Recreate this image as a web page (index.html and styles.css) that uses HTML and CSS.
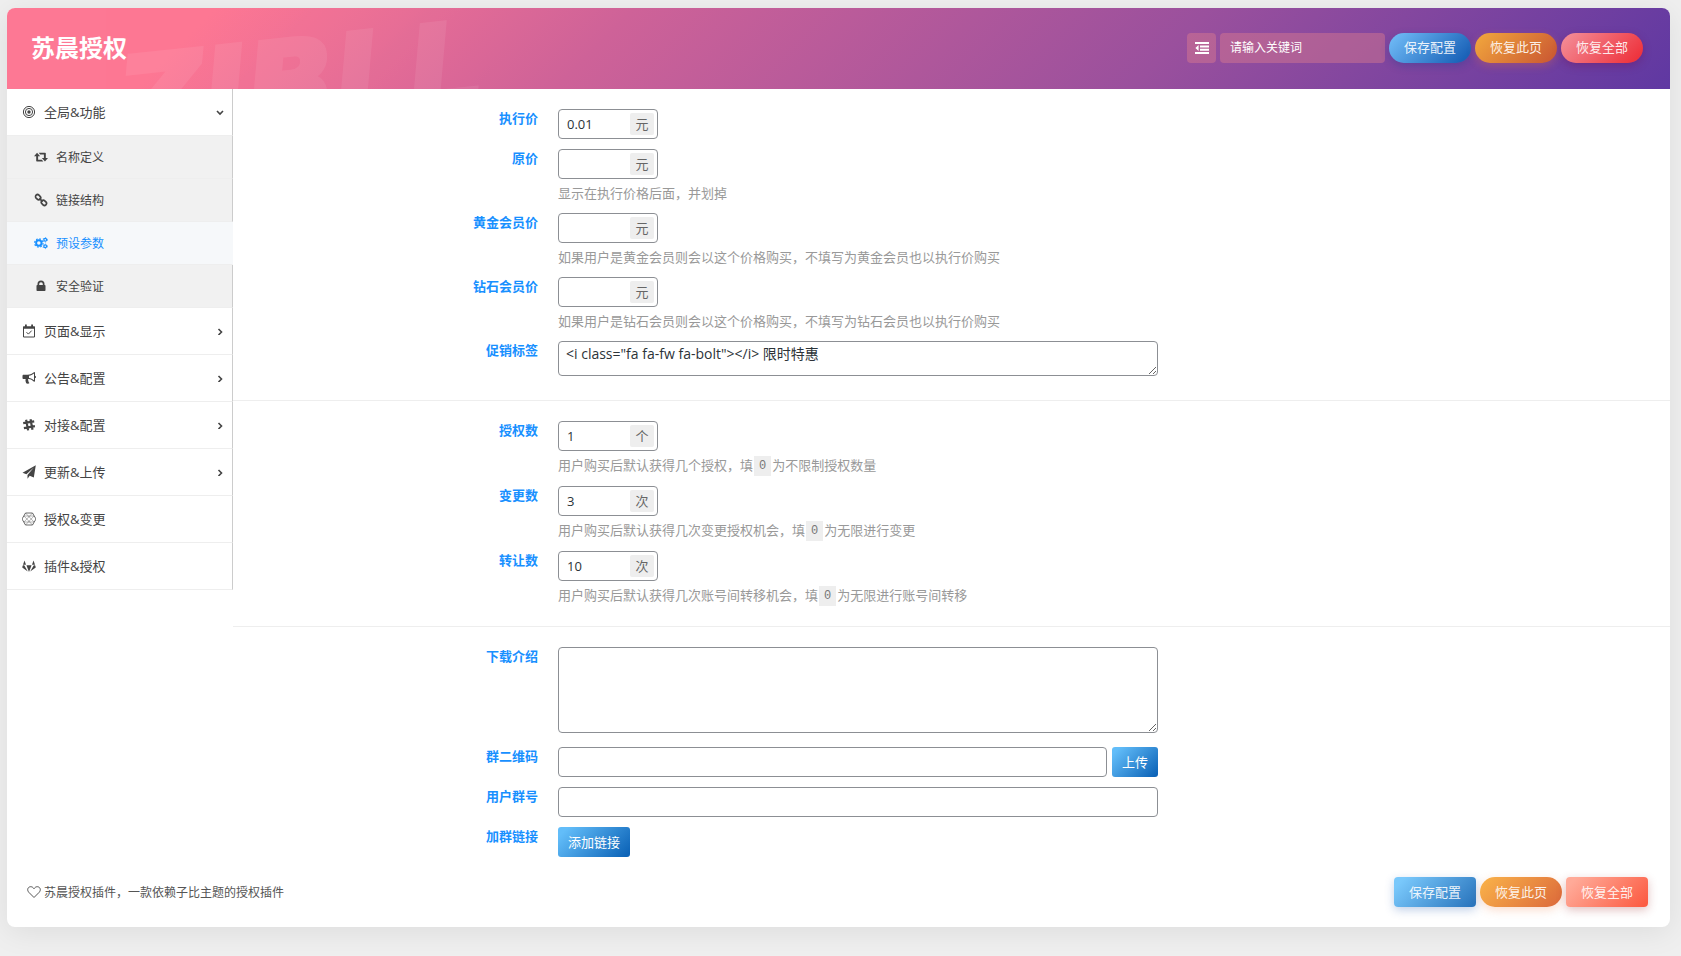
FILE: index.html
```
<!DOCTYPE html>
<html lang="zh-CN">
<head>
<meta charset="utf-8">
<title>苏晨授权</title>
<link rel="stylesheet" href="styles.css">
</head>
<body>
<form class="panel">
  <header class="header">
    <div class="watermark" aria-hidden="true">ZIBLL</div>
    <h1 class="header-title">苏晨授权</h1>
    <div class="header-tools">
      <button type="button" class="expand" aria-label="展开全部">
        <svg class="icon" viewBox="0 0 14 14"><path d="M0 1h14v2H0zM5 4.400h9v2H5zM5 7.700h9v2H5zM0 11h14v2H0zM3.600 4v6L.4 7z"/></svg>
      </button>
      <input class="search" type="text" placeholder="请输入关键词" aria-label="请输入关键词">
      <button type="button" class="btn round blue">保存配置</button>
      <button type="button" class="btn round orange">恢复此页</button>
      <button type="button" class="btn round red">恢复全部</button>
    </div>
  </header>

  <div class="main">
    <nav class="nav">
      <a class="item" href="#global">
        <svg class="icon line" viewBox="0 0 14 14"><circle cx="7" cy="7" r="5.600"/><circle cx="7" cy="7" r="3.600"/><circle class="solid" cx="7" cy="7" r="1.700"/></svg>
        <span class="name">全局&amp;功能</span>
        <svg class="arrow" viewBox="0 0 8 8"><path d="M1 3l3 3 3-3"/></svg>
      </a>
      <div class="sub">
        <a class="item" href="#names">
          <svg class="icon" viewBox="0 0 16 14"><path d="M3.500 2L7 6H4.700v4H9l1.600 2H3.300a.8.8 0 0 1-.8-.8V6H0zM5.400 2h7.300c.5 0 .8.300.8.800V8H16l-3.500 4L9 8h2.300V4H7z"/></svg>
          <span class="name">名称定义</span>
        </a>
        <a class="item" href="#links">
          <svg class="icon line thick" viewBox="0 0 14 14"><rect x="1.300" y="2.200" width="5.600" height="4" rx="2" transform="rotate(45 4.100 4.200)"/><rect x="7.100" y="7.800" width="5.600" height="4" rx="2" transform="rotate(45 9.900 9.800)"/><path d="M5.400 5.400l3.200 3.200"/></svg>
          <span class="name">链接结构</span>
        </a>
        <a class="item active" href="#presets">
          <svg class="icon line" viewBox="0 0 16 14"><circle cx="5.500" cy="7" r="3.100" stroke-width="2.200"/><circle cx="5.500" cy="7" r="4.800" stroke-width="1.300" stroke-dasharray="1.900 1.870"/><circle cx="12.800" cy="3.400" r="1.600" stroke-width="1.400"/><circle cx="12.800" cy="3.400" r="2.600" stroke-width=".8" stroke-dasharray="1.300 1.400"/><circle cx="12.800" cy="10.800" r="1.600" stroke-width="1.400"/><circle cx="12.800" cy="10.800" r="2.600" stroke-width=".8" stroke-dasharray="1.300 1.400"/></svg>
          <span class="name">预设参数</span>
        </a>
        <a class="item" href="#security">
          <svg class="icon" viewBox="0 0 14 14"><path fill-rule="evenodd" d="M3.500 6V5a3.500 3.500 0 0 1 7 0v1h.2c.5 0 .8.300.8.800v4.400c0 .5-.3.800-.8.800H3.300a.8.8 0 0 1-.8-.8V6.800c0-.5.3-.8.8-.8zM5.200 6h3.600V5a1.800 1.800 0 0 0-3.600 0z"/></svg>
          <span class="name">安全验证</span>
        </a>
      </div>
      <a class="item" href="#pages">
        <svg class="icon line" viewBox="0 0 14 14"><path d="M1.500 3h11v10h-11zM4.500 8.200l1.900 1.900 3.300-3.500"/><path class="solid" d="M1 2.500h12v2.200H1zM3 .5h1.800v3H3zM9.200.5H11v3H9.200z"/></svg>
        <span class="name">页面&amp;显示</span>
        <svg class="arrow" viewBox="0 0 8 8"><path d="M2.500 2l3 3-3 3"/></svg>
      </a>
      <a class="item" href="#notice">
        <svg class="icon" viewBox="0 0 14 14"><path fill-rule="evenodd" d="M12.300 1c.4 0 .7.300.7.700v3c1.300.2 1.300 2.200 0 2.400v3c0 .6-.6.900-1 .6C10.400 9.300 8.700 8.300 6.500 8.100c-.9.500-.4 1.500.1 1.900-.5.700.4 1.500.9 2-.5 1-2.500 1-3.300.3-.5-1.500-1.100-2.700-.5-4.300H1.600C1 8 .5 7.500.5 6.900V5c0-.7.500-1.200 1.100-1.200H5.500C8.300 3.800 10.400 2.300 12.300 1zM12 2.400C10.500 3.600 8.900 4.500 7 4.700v2.400c1.900.2 3.500 1 5 2.200z"/></svg>
        <span class="name">公告&amp;配置</span>
        <svg class="arrow" viewBox="0 0 8 8"><path d="M2.500 2l3 3-3 3"/></svg>
      </a>
      <a class="item" href="#connect">
        <svg class="icon line" viewBox="0 0 14 14"><path stroke-width="2.200" d="M4.100 1.800l2 10.600M8.500 1.200l2 10.600M1.200 5.200l11-1.900M1.900 10.100l11-1.900"/></svg>
        <span class="name">对接&amp;配置</span>
        <svg class="arrow" viewBox="0 0 8 8"><path d="M2.500 2l3 3-3 3"/></svg>
      </a>
      <a class="item" href="#update">
        <svg class="icon" viewBox="0 0 14 14"><path d="M13.800.3l-2 12.200-4.100-1.700-2.200 2.900V9.900l6.300-7.400-7.400 6.700L.5 7.800z"/></svg>
        <span class="name">更新&amp;上传</span>
        <svg class="arrow" viewBox="0 0 8 8"><path d="M2.500 2l3 3-3 3"/></svg>
      </a>
      <a class="item" href="#license">
        <svg class="icon line thin" viewBox="1 0 14 14"><path stroke-width=".8" d="M4.500 1h7L15 7l-3.500 6h-7L1 7z"/><path d="M4.500 1L13 10M11.500 1L3 10M4.500 13L13 4M11.500 13L3 4M3 4h10M3 10h10"/></svg>
        <span class="name">授权&amp;变更</span>
      </a>
      <a class="item" href="#plugins">
        <svg class="icon" viewBox="0 0 14 14"><path d="M2.500 1.500L4 5.700H1zM11.500 1.500L13 5.700h-3zM.9 6.200h1.300L5.800 12.500.6 8.700a.7.7 0 0 1-.3-.8zM13.100 6.200h-1.300L8.200 12.500l5.200-3.800c.3-.2.4-.5.300-.8zM4.400 6.200h5.200L7 13z"/></svg>
        <span class="name">插件&amp;授权</span>
      </a>
    </nav>

    <div class="content">
      <section class="group">
        <div class="field">
          <label class="label" for="price">执行价</label>
          <div class="control"><div class="number"><input id="price" type="text" value="0.01"><span class="unit">元</span></div></div>
        </div>
        <div class="field">
          <label class="label" for="original">原价</label>
          <div class="control">
            <div class="number"><input id="original" type="text"><span class="unit">元</span></div>
            <p class="desc">显示在执行价格后面，并划掉</p>
          </div>
        </div>
        <div class="field">
          <label class="label" for="gold">黄金会员价</label>
          <div class="control">
            <div class="number"><input id="gold" type="text"><span class="unit">元</span></div>
            <p class="desc">如果用户是黄金会员则会以这个价格购买，不填写为黄金会员也以执行价购买</p>
          </div>
        </div>
        <div class="field">
          <label class="label" for="diamond">钻石会员价</label>
          <div class="control">
            <div class="number"><input id="diamond" type="text"><span class="unit">元</span></div>
            <p class="desc">如果用户是钻石会员则会以这个价格购买，不填写为钻石会员也以执行价购买</p>
          </div>
        </div>
        <div class="field">
          <label class="label" for="tag">促销标签</label>
          <div class="control"><textarea id="tag" class="area short">&lt;i class="fa fa-fw fa-bolt"&gt;&lt;/i&gt; 限时特惠</textarea></div>
        </div>
      </section>

      <section class="group">
        <div class="field">
          <label class="label" for="auth">授权数</label>
          <div class="control">
            <div class="number"><input id="auth" type="text" value="1"><span class="unit">个</span></div>
            <p class="desc">用户购买后默认获得几个授权，填<code>0</code>为不限制授权数量</p>
          </div>
        </div>
        <div class="field">
          <label class="label" for="change">变更数</label>
          <div class="control">
            <div class="number"><input id="change" type="text" value="3"><span class="unit">次</span></div>
            <p class="desc">用户购买后默认获得几次变更授权机会，填<code>0</code>为无限进行变更</p>
          </div>
        </div>
        <div class="field">
          <label class="label" for="transfer">转让数</label>
          <div class="control">
            <div class="number"><input id="transfer" type="text" value="10"><span class="unit">次</span></div>
            <p class="desc">用户购买后默认获得几次账号间转移机会，填<code>0</code>为无限进行账号间转移</p>
          </div>
        </div>
      </section>

      <section class="group">
        <div class="field">
          <label class="label" for="intro">下载介绍</label>
          <div class="control"><textarea id="intro" class="area tall"></textarea></div>
        </div>
        <div class="field">
          <label class="label" for="qrcode">群二维码</label>
          <div class="control upload"><input id="qrcode" class="text" type="text"><button type="button" class="small-btn">上传</button></div>
        </div>
        <div class="field">
          <label class="label" for="group">用户群号</label>
          <div class="control upload"><input id="group" class="text" type="text"></div>
        </div>
        <div class="field">
          <label class="label" for="add-link">加群链接</label>
          <div class="control upload"><button id="add-link" type="button" class="small-btn">添加链接</button></div>
        </div>
      </section>
    </div>
  </div>

  <footer class="footer">
    <p class="credit">
      <svg class="heart" viewBox="0 0 14 14"><path d="M7 12.500L1.800 7.300C-.6 4.500 1.300 1.700 3.700 1.700 5.300 1.700 6.300 2.700 7 3.700c.7-1 1.700-2 3.300-2 2.400 0 4.300 2.800 1.900 5.600z"/></svg>
      <span>苏晨授权插件，一款依赖子比主题的授权插件</span>
    </p>
    <div class="footer-tools">
      <button type="button" class="btn light-blue">保存配置</button>
      <button type="button" class="btn round light-orange">恢复此页</button>
      <button type="button" class="btn light-red">恢复全部</button>
    </div>
  </footer>
</form>
</body>
</html>
```
FILE: styles.css
```
* { box-sizing: border-box; }

body {
  margin: 0;
  padding: 8px 11px 28px 7px;
  background: #efefef;
  color: #444;
  font-family: "Open Sans", "Noto Sans CJK SC", sans-serif;
  font-size: 13px;
  line-height: 19px;
}

button, input, textarea { margin: 0; font: inherit; }
button { border: 0; cursor: pointer; }

.panel {
  background: #fff;
  border-radius: 8px;
  box-shadow: 0 5px 30px rgba(0, 0, 0, .08);
}

/* Header */
.header {
  position: relative;
  display: flex;
  align-items: center;
  justify-content: space-between;
  overflow: hidden;
  height: 81px;
  padding: 0 27px 2px 24px;
  border-radius: 8px 8px 0 0;
  background: linear-gradient(135deg, #fd7894 12%, #ce6298 36%, #9a509d 69%, #5f38a2 100%);
}
.watermark {
  position: absolute;
  left: 112px;
  top: 25px;
  color: #fff;
  font: italic bold 116px/100px "DejaVu Sans", sans-serif;
  opacity: .07;
  transform: rotate(-6deg);
  -webkit-text-stroke: 5px #fff;
}
.header-title {
  position: relative;
  margin: 0;
  color: #fff;
  font-size: 24px;
  line-height: 30px;
}
.header-tools, .footer-tools { display: flex; gap: 4px; }
.header-tools { position: relative; }
.expand {
  display: flex;
  align-items: center;
  justify-content: center;
  width: 29px;
  height: 30px;
  padding: 0;
  border-radius: 4px;
  background: rgba(230, 130, 140, .4);
  color: #fff;
}
.search {
  width: 165px;
  height: 30px;
  padding: 0 10px;
  border: 0;
  border-radius: 4px;
  background: rgba(230, 130, 140, .4);
  color: #fff;
  font-size: 12px;
}
.search::placeholder { color: #fff; opacity: 1; }

.btn {
  width: 82px;
  height: 30px;
  padding: 0;
  border-radius: 4px;
  color: rgba(255, 255, 255, .9);
}
.round { border-radius: 15px; }
.blue { background: linear-gradient(135deg, #6ab5f2 10%, #1a62b8 90%); box-shadow: 0 3px 8px rgba(20, 60, 140, .3); }
.orange { background: linear-gradient(135deg, #eea03c 10%, #cd5d33 90%); box-shadow: 0 3px 8px rgba(230, 110, 60, .3); }
.red { background: linear-gradient(135deg, #f38791 10%, #ee343e 90%); box-shadow: 0 3px 8px rgba(110, 20, 90, .4); }
.light-blue { background: linear-gradient(135deg, #79c8fb 10%, #2b76be 95%); box-shadow: 0 3px 10px rgba(50, 100, 180, .3); }
.light-orange { background: linear-gradient(135deg, #f7ac48 10%, #dd6c3b 95%); box-shadow: 0 3px 10px rgba(240, 120, 60, .25); }
.light-red { background: linear-gradient(135deg, #ffaa98 10%, #fc5c43 95%); box-shadow: 0 3px 10px rgba(160, 50, 50, .3); }

/* Side menu */
.main { display: flex; align-items: flex-start; }
.nav { flex: 0 0 226px; }
.item {
  display: flex;
  align-items: center;
  height: 47px;
  padding: 0 8px 0 15px;
  border-right: 1px solid #ccc;
  border-bottom: 1px solid #eee;
  color: #444;
  text-decoration: none;
}
.icon { width: 14px; height: 14px; fill: currentColor; }
.line { fill: none; stroke: currentColor; }
.line .solid { fill: currentColor; stroke: none; }
.thick { stroke-width: 1.7; }
.thin { stroke-width: .4; }
.name { flex: 1; margin-left: 8px; }
.arrow {
  width: 8px;
  height: 8px;
  fill: none;
  stroke: currentColor;
  stroke-width: 1.6;
}
.sub .item {
  height: 43px;
  padding-left: 27px;
  background: #f1f1f1;
  font-size: 12px;
}
.sub .active {
  border-right-color: #f6f8fa;
  background: #f6f8fa;
  color: #1890ff;
}

/* Form */
.content { flex: 1; min-width: 0; }
.group {
  display: flex;
  flex-direction: column;
  gap: 10px;
  padding: 20px 20px 20px 0;
  border-bottom: 1px solid #eee;
}
.group:last-child { border-bottom: 0; }
.field { display: flex; gap: 20px; }
.label {
  flex: 0 0 305px;
  color: #1890ff;
  font-weight: bold;
  text-align: right;
}
.control { flex: 0 1 600px; min-width: 0; }
.number {
  display: flex;
  align-items: center;
  width: 100px;
  height: 30px;
  padding-right: 3px;
  border: 1px solid #8c8f94;
  border-radius: 4px;
}
.number input {
  flex: 1;
  min-width: 0;
  padding: 0 8px;
  border: 0;
  background: none;
  color: #2c3338;
}
.unit {
  width: 24px;
  border-radius: 2px;
  background: #eee;
  color: #666;
  line-height: 22px;
  text-align: center;
}
.desc { margin: 5px 0 0; color: #999; }
.desc code {
  display: inline-block;
  margin: 0 1px;
  padding: 0 5px;
  background: #eee;
  color: #777;
  font: 12px/20px "Liberation Mono", monospace;
  vertical-align: top;
}
.area, .text {
  display: block;
  width: 100%;
  border: 1px solid #8c8f94;
  border-radius: 4px;
  background: #fff;
  color: #2c3338;
}
.area { margin-bottom: 4px; padding: 2px 7px; font-size: 14px; }
.short { height: 35px; }
.tall { height: 86px; }
.text { height: 30px; padding: 0 8px; }
.upload { display: flex; gap: 5px; }
.small-btn {
  flex: none;
  height: 30px;
  padding: 0 10px;
  border-radius: 3px;
  background: linear-gradient(135deg, #62bdf9 10%, #0d64b8 95%);
  color: #fff;
}

/* Footer */
.footer {
  display: flex;
  align-items: center;
  justify-content: space-between;
  padding: 0 22px 20px 20px;
}
.credit {
  display: flex;
  align-items: center;
  gap: 3px;
  margin: 0;
  color: #555;
  font-size: 12px;
}
.heart { width: 14px; height: 14px; fill: none; stroke: currentColor; }
```
